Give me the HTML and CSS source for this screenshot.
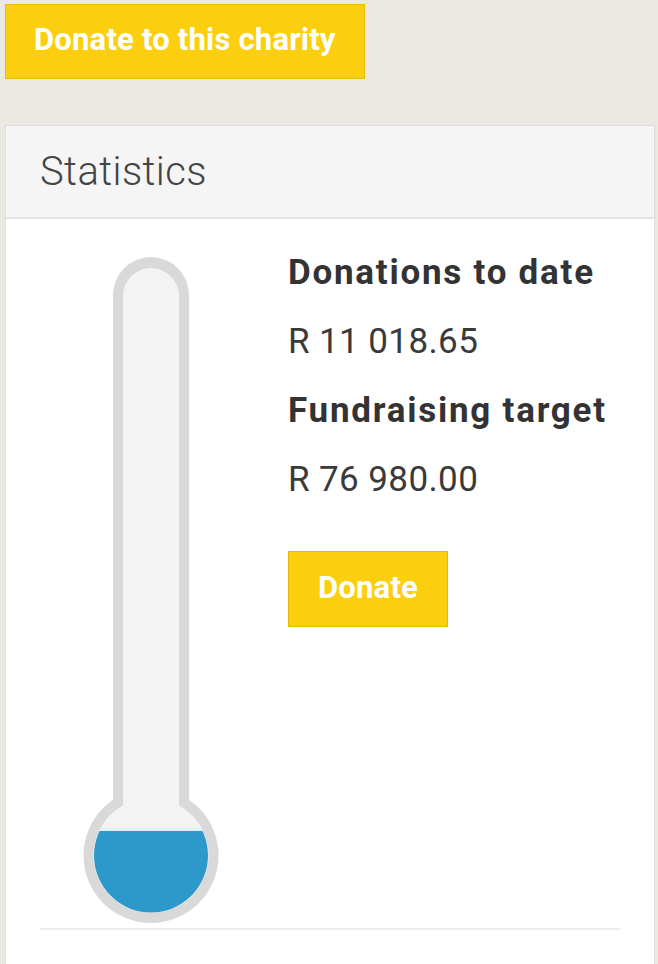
FILE: index.html
```html
<!DOCTYPE html>
<html lang="en">
<head>
    <meta charset="UTF-8">
    <meta name="viewport" content="width=device-width, initial-scale=1.0">
    <title>Charity Statistics</title>
    <link rel="stylesheet" href="styles.css">
</head>
<body>
    <div class="page">
        <a class="btn btn-top" href="#">Donate to this charity</a>

        <div class="panel">
            <div class="panel-header">Statistics</div>
            <div class="panel-body">
                <div class="stats-row">
                    <div class="thermo">
                        <svg width="136" height="667" viewBox="0 0 136 667">
                            <defs>
                                <clipPath id="level">
                                    <rect x="0" y="574" width="136" height="100"></rect>
                                </clipPath>
                                <clipPath id="meniscus">
                                    <rect x="0" y="571" width="136" height="3"></rect>
                                </clipPath>
                            </defs>
                            <!-- outer glass -->
                            <rect x="30" y="0" width="76" height="600" rx="38" fill="#d9d9d9"></rect>
                            <circle cx="68" cy="598.5" r="67.5" fill="#d9d9d9"></circle>
                            <!-- inner tube -->
                            <rect x="40" y="11" width="56" height="590" rx="28" fill="#f3f3f3"></rect>
                            <circle cx="68" cy="598.5" r="57.5" fill="#f3f3f3"></circle>
                            <!-- mercury -->
                            <circle cx="68" cy="598.5" r="57" fill="#e2f1f9" clip-path="url(#meniscus)"></circle>
                            <circle cx="68" cy="598.5" r="57" fill="#2d98ca" clip-path="url(#level)"></circle>
                        </svg>
                    </div>
                    <div class="stats">
                        <h3>Donations to date</h3>
                        <p>R 11 018.65</p>
                        <h3>Fundraising target</h3>
                        <p>R 76 980.00</p>
                        <a class="btn btn-donate" href="#">Donate</a>
                    </div>
                </div>
                <hr class="divider">
            </div>
        </div>
    </div>
</body>
</html>
```

FILE: styles.css
```css
body {
    margin: 0;
    background: #ebe7e1;
    font-family: Roboto, "Liberation Sans", Arial, sans-serif;
    color: #333;
}
.page {
    padding: 4px 3px 0 5px;
}
.btn {
    display: inline-block;
    background-color: #fbcf0e;
    border: 1px solid #e6bc0b;
    color: #fff;
    font-size: 31px;
    font-weight: 700;
    letter-spacing: 0.2px;
    text-decoration: none;
}
.btn-top {
    line-height: 70px;
    padding: 0 28px 3px;
}
.btn-donate {
    margin-top: 22px;
    line-height: 72px;
    padding: 0 29px 2px;
}
.panel {
    margin-top: 46px;
    background-color: #fff;
    border: 1px solid #dedede;
}
.panel-header {
    height: 91px;
    line-height: 91px;
    padding: 0 34px;
    background-color: #f5f5f5;
    border-bottom: 2px solid #e2e2e2;
    font-size: 40px;
    font-weight: 300;
    letter-spacing: 0.4px;
    color: #444;
}
.panel-body {
    padding: 38px 34px 40px;
}
.stats-row {
    display: flex;
    gap: 27px;
}
.thermo {
    width: 221px;
    display: flex;
    justify-content: center;
}
.thermo svg {
    display: block;
}
.stats {
    margin-top: -4px;
}
.stats h3 {
    margin: 0 0 29px;
    font-size: 35px;
    line-height: 40px;
    font-weight: 700;
    letter-spacing: 1.75px;
    color: #333;
}
.stats p {
    margin: 0 0 29px;
    font-size: 35px;
    line-height: 40px;
    letter-spacing: 0.4px;
    color: #3a3a3a;
}
.divider {
    margin: 4px 0 0;
    border: none;
    border-top: 2px solid #eee;
}
```
